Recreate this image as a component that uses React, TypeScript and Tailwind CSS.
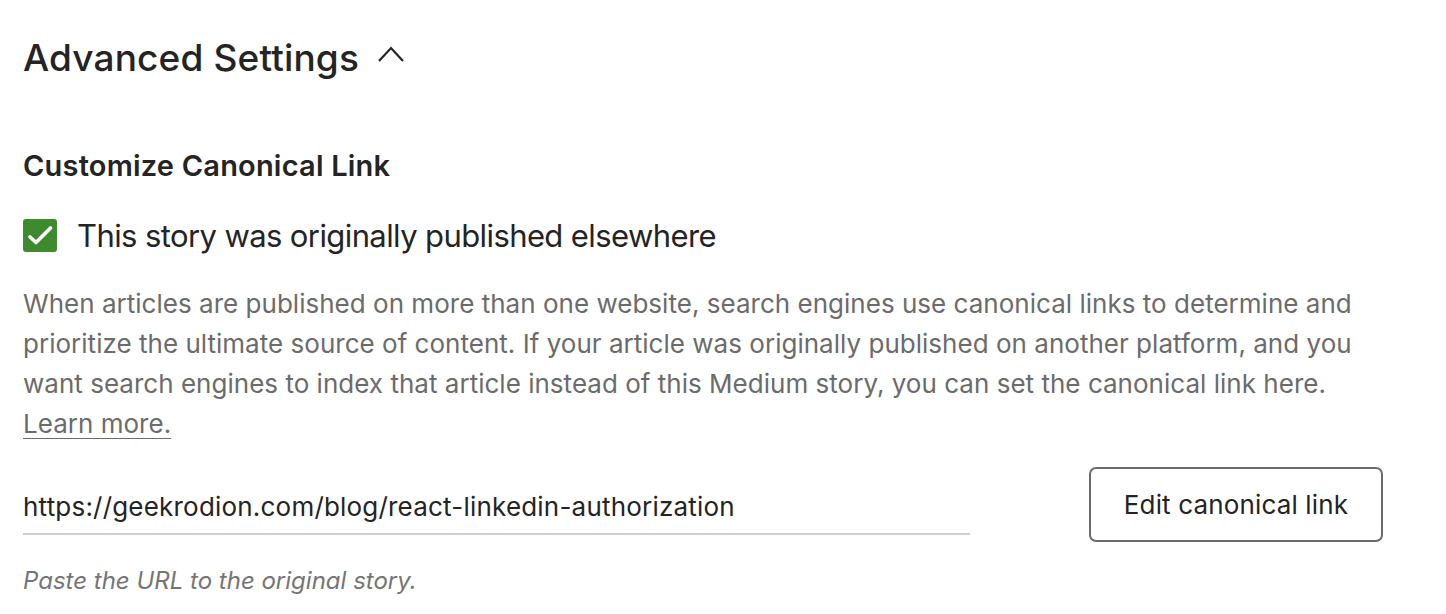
import { ReactNode } from "react";

function Checkbox({ children }: { children: ReactNode }) {
  return (
    <label className="flex items-center gap-[20px]">
      <span className="flex h-[33px] w-[34px] items-center justify-center rounded-[3px] bg-[#3e8a2f]">
        <svg width="34" height="33" viewBox="0 0 34 33" fill="none">
          <path d="M7 18 L13 23.5 L27.5 9" stroke="#fff" strokeWidth="3.6" strokeLinecap="round" strokeLinejoin="round" />
        </svg>
      </span>
      <span className="text-[31px] leading-none tracking-[-0.6px] text-[#242424]">{children}</span>
    </label>
  );
}

export default function App() {
  return (
    <div className="min-h-screen bg-white px-[23px] pt-[36px] font-['Inter',sans-serif] text-[#242424]">
      {/* Header */}
      <div className="flex items-center gap-[18px]">
        <h2 className="text-[37px] font-medium leading-[44px] tracking-[0.15px]">Advanced Settings</h2>
        <svg width="28" height="18" viewBox="0 0 28 18" fill="none" className="mb-[8px]">
          <path d="M2 16 L14 3 L26 16" stroke="#242424" strokeWidth="2.2" />
        </svg>
      </div>

      {/* Canonical link */}
      <h3 className="mt-[69px] text-[29px] font-semibold leading-[34px] tracking-[0.2px]">Customize Canonical Link</h3>

      <div className="mt-[36px]">
        <Checkbox>This story was originally published elsewhere</Checkbox>
      </div>

      <p className="mt-[32px] whitespace-nowrap text-[26px] leading-[40px] tracking-[0.02px] text-[#6b6b6b]">
        When articles are published on more than one website, search engines use canonical links to determine and
        <br />
        prioritize the ultimate source of content. If your article was originally published on another platform, and you
        <br />
        want search engines to index that article instead of this Medium story, you can set the canonical link here.
        <br />
        <a href="#" className="underline decoration-1 underline-offset-[5px]">Learn more.</a>
      </p>

      <div className="mt-[22px] flex items-start justify-between pr-[40px]">
        <div className="w-[947px]">
          <div className="border-b-2 border-[#cfcfcf] pb-[9px] pt-[24px] text-[26px] leading-[34px] tracking-[0.2px]">
            https://geekrodion.com/blog/react-linkedin-authorization
          </div>
          <p className="mt-[32px] text-[24px] italic leading-[28px] tracking-[0px] text-[#757575]">
            Paste the URL to the original story.
          </p>
        </div>
        <button className="mt-[1px] h-[75px] w-[294px] rounded-[7px] border-2 border-[#6b6b6b] text-[26px] tracking-[0.15px] text-[#242424]">
          Edit canonical link
        </button>
      </div>
    </div>
  );
}
